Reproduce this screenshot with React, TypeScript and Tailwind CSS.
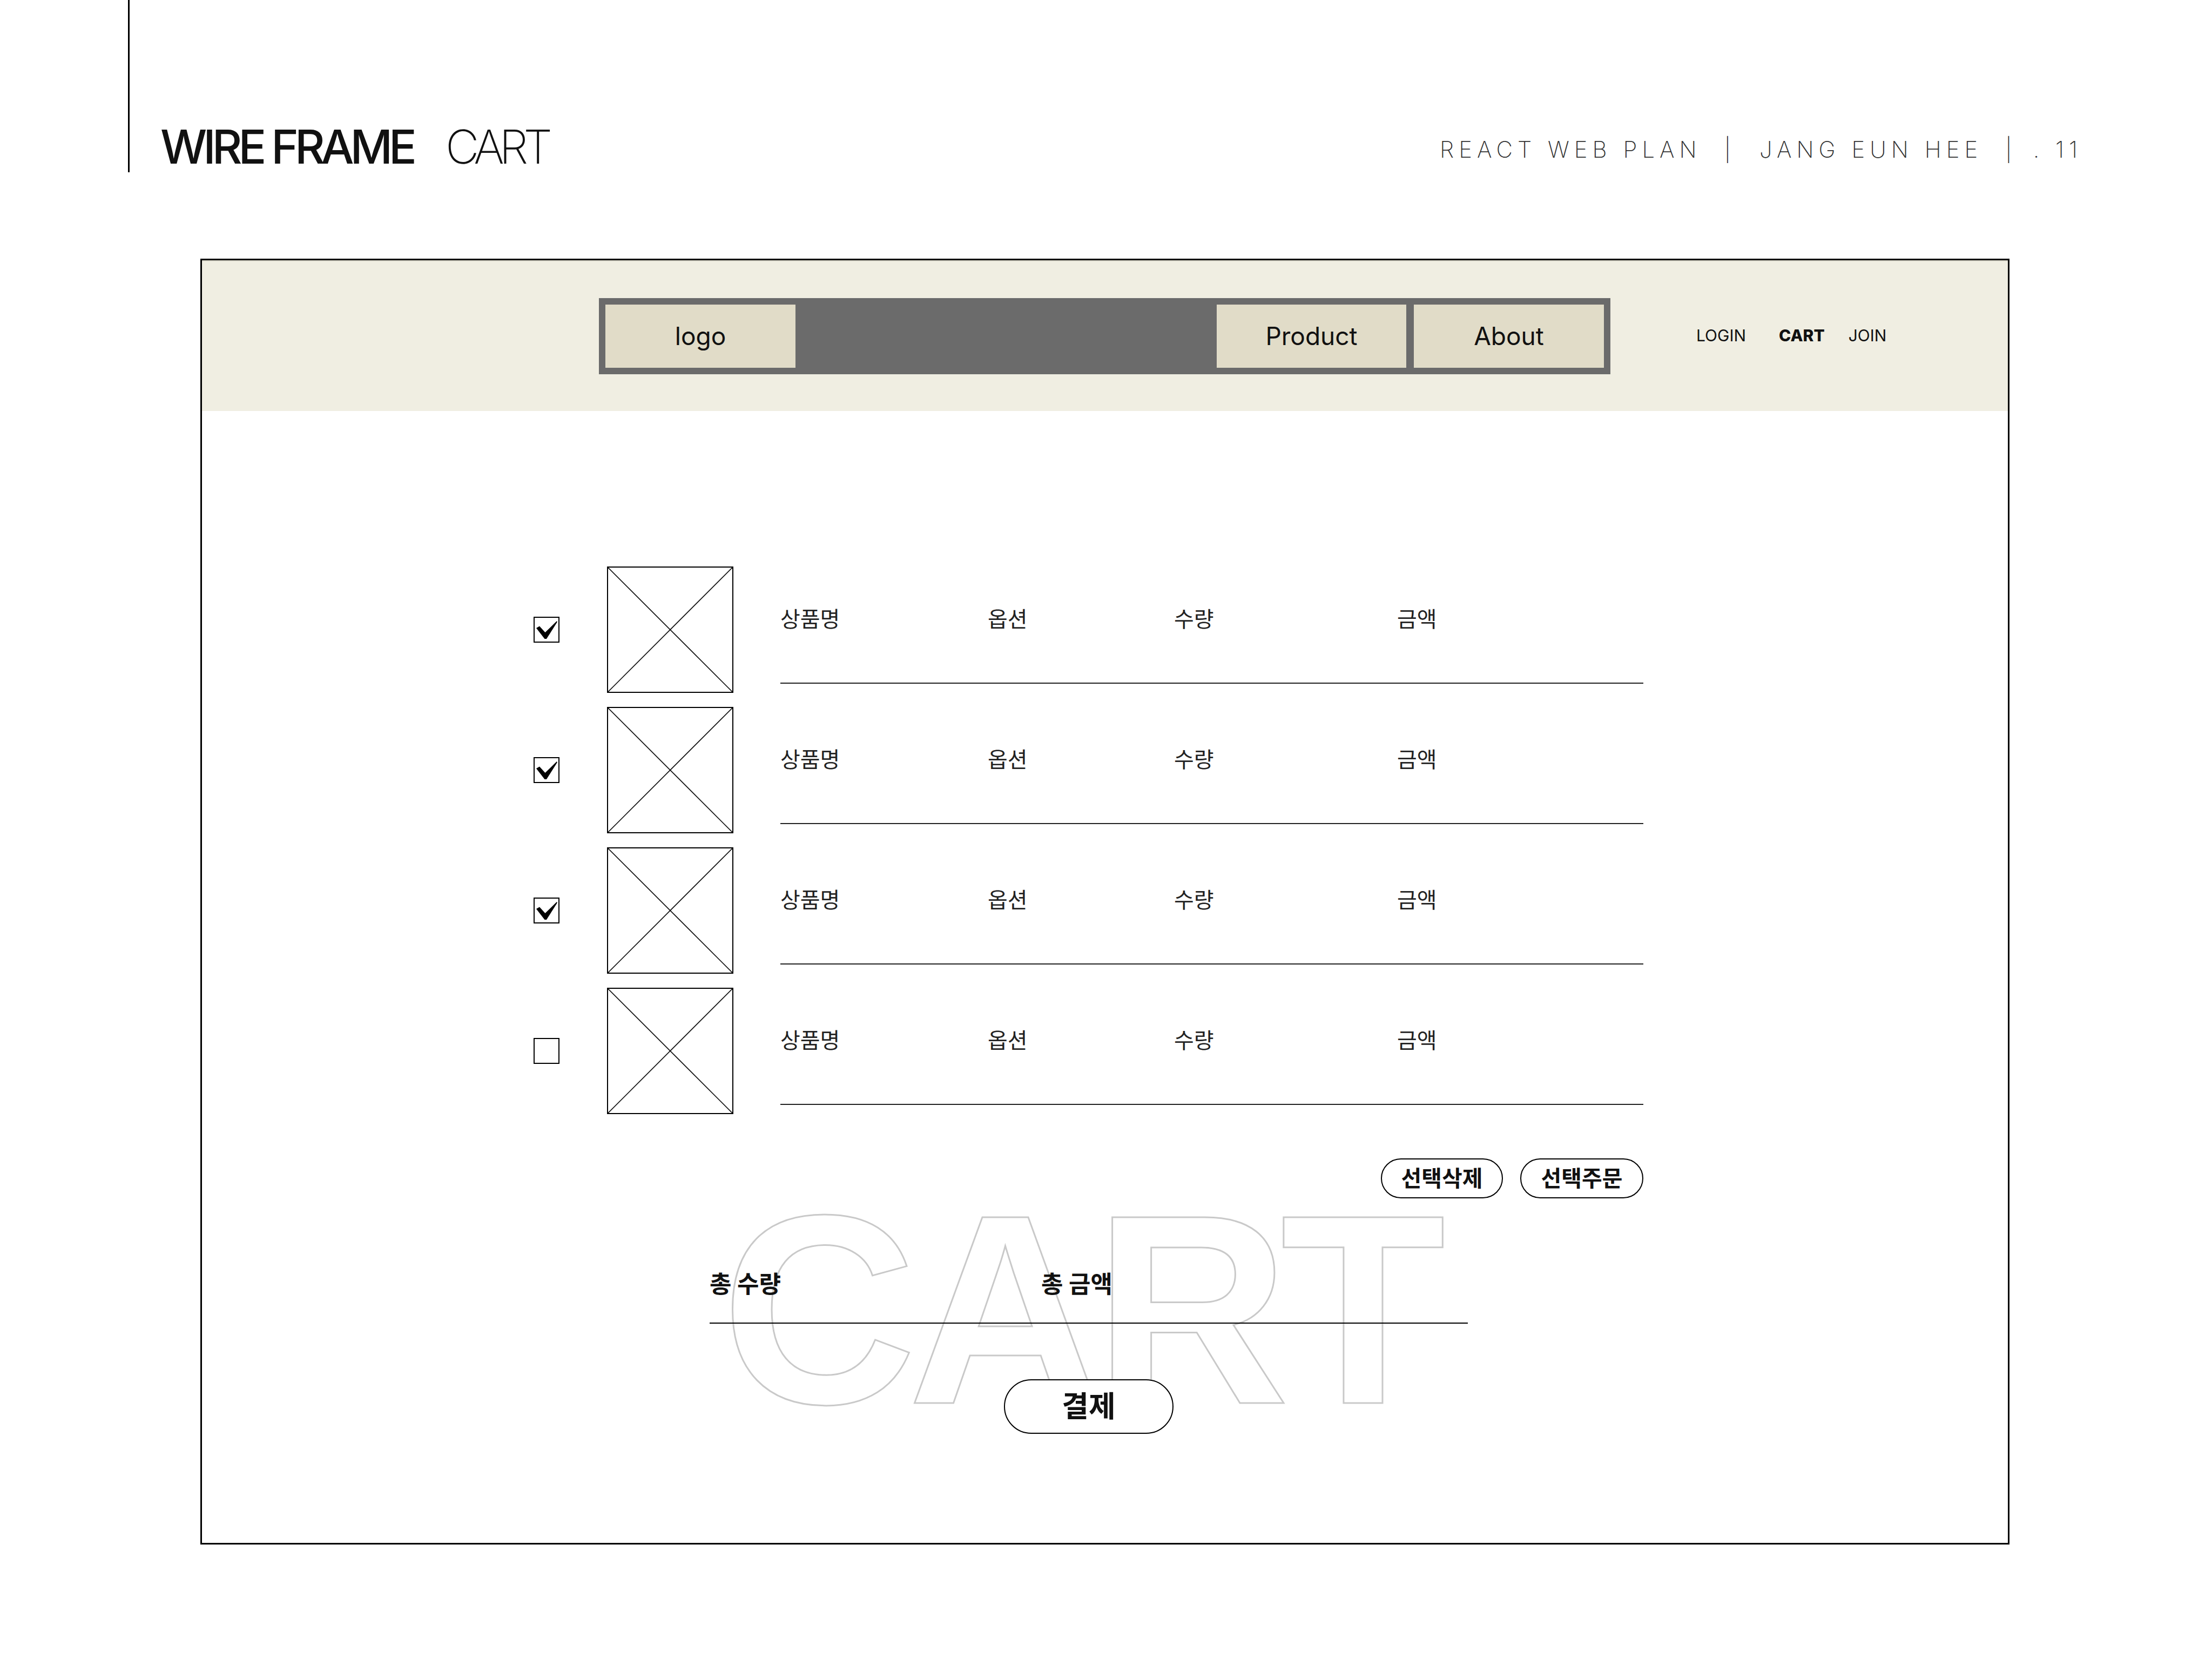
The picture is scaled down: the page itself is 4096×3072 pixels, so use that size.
import React from "react"

const rows = [true, true, true, false]

const CheckBox = ({ checked }: { checked: boolean }) => (
  <div className="w-[48px] h-[48px] border-2 border-black bg-white shrink-0">
    {checked && (
      <svg viewBox="0 0 44 44" className="w-full h-full">
        <path d="M3 19 L9 15.5 L19.5 27 L41 6 L42 7.5 L22 39 L18.5 39 Z" fill="#000" />
      </svg>
    )}
  </div>
)

const ImageBox = () => (
  <div className="w-[234px] h-[234px] border-2 border-black bg-white shrink-0">
    <svg viewBox="0 0 100 100" preserveAspectRatio="none" className="w-full h-full">
      <line x1="0" y1="0" x2="100" y2="100" stroke="#111" strokeWidth="1.6" vectorEffect="non-scaling-stroke" />
      <line x1="100" y1="0" x2="0" y2="100" stroke="#111" strokeWidth="1.6" vectorEffect="non-scaling-stroke" />
    </svg>
  </div>
)

const App = () => {
  return (
    <div className="w-[4096px] h-[3072px] bg-white text-[#111] font-['Inter','Noto_Sans_CJK_KR',sans-serif] overflow-hidden">
      {/* top title row */}
      <div className="flex items-start h-[479px]">
        <div className="ml-[237px] w-[3px] h-[319px] bg-black" />
        <div className="ml-[57px] mt-[229px] flex items-baseline leading-none">
          <span className="text-[86px] font-medium tracking-[-7px]">WIRE FRAME</span>
          <span className="ml-[60px] text-[86px] font-extralight tracking-[-9px]">CART</span>
        </div>
        <div className="ml-auto mr-[240px] mt-[256px] flex items-center leading-none text-[42px] font-extralight text-[#333] tracking-[9px]">
          <span>REACT WEB PLAN</span>
          <span className="ml-[42px]">|</span>
          <span className="ml-[44px]">JANG EUN HEE</span>
          <span className="ml-[42px]">|</span>
          <span className="ml-[30px]">. 11</span>
        </div>
      </div>

      {/* wireframe */}
      <div className="relative ml-[371px] w-[3350px] h-[2381px] border-[3px] border-black flex flex-col">
        {/* watermark */}
        <div className="absolute left-[962px] top-[1693px] text-[500px] leading-none font-['Liberation_Sans',sans-serif] font-bold text-transparent [-webkit-text-stroke:3px_#c9c9c9] tracking-[-16px] select-none">
          CART
        </div>

        {/* header band */}
        <div className="relative h-[279px] bg-[#f0eee2] border-t-2 border-[#dcd9cc] flex items-center pl-[735px]">
          <div className="w-[1873px] h-[141px] bg-[#6b6b6b] p-[12px] flex justify-between">
            <div className="w-[352px] h-full bg-[#e1dcc8] flex items-center justify-center text-[46px]">logo</div>
            <div className="flex gap-[14px]">
              <div className="w-[351px] h-full bg-[#e1dcc8] flex items-center justify-center text-[46px]">Product</div>
              <div className="w-[352px] h-full bg-[#e1dcc8] flex items-center justify-center text-[46px]">About</div>
            </div>
          </div>
          <div className="ml-[159px] mb-[4px] flex items-center text-[30px] leading-none">
            <span>LOGIN</span>
            <span className="ml-[61px] font-extrabold">CART</span>
            <span className="ml-[44px]">JOIN</span>
          </div>
        </div>

        {/* cart rows */}
        <div className="relative ml-[614px] mt-[288px] w-[2055px] flex flex-col gap-[26px]">
          {rows.map((checked, i) => (
            <div key={i} className="flex items-center h-[234px]">
              <CheckBox checked={checked} />
              <div className="ml-[88px]">
                <ImageBox />
              </div>
              <div className="ml-[87px] self-start w-[1599px] h-[217px] border-b-2 border-[#222] pt-[78px]">
                <div className="grid grid-cols-[384px_345px_413px_1fr] text-[40px] leading-[40px] text-[#222]">
                  <span>상품명</span>
                  <span>옵션</span>
                  <span>수량</span>
                  <span>금액</span>
                </div>
              </div>
            </div>
          ))}
        </div>

        {/* selection buttons */}
        <div className="relative ml-[614px] w-[2055px] mt-[82px] flex justify-end gap-[32px]">
          <button className="w-[226px] h-[74px] rounded-full border-2 border-black bg-white text-[41px] font-bold leading-none">
            선택삭제
          </button>
          <button className="w-[228px] h-[74px] rounded-full border-2 border-black bg-white text-[41px] font-bold leading-none">
            선택주문
          </button>
        </div>

        {/* totals */}
        <div className="relative ml-[940px] w-[1404px] mt-[139px]">
          <div className="flex text-[44px] leading-[40px] font-bold pb-[51px] border-b-2 border-black">
            <span className="w-[614px]">총 수량</span>
            <span>총 금액</span>
          </div>
          <div className="flex justify-center mt-[103px]">
            <button className="w-[314px] h-[101px] rounded-full border-2 border-black bg-white text-[54px] font-bold leading-none">
              결제
            </button>
          </div>
        </div>
      </div>
    </div>
  )
}

export default App
